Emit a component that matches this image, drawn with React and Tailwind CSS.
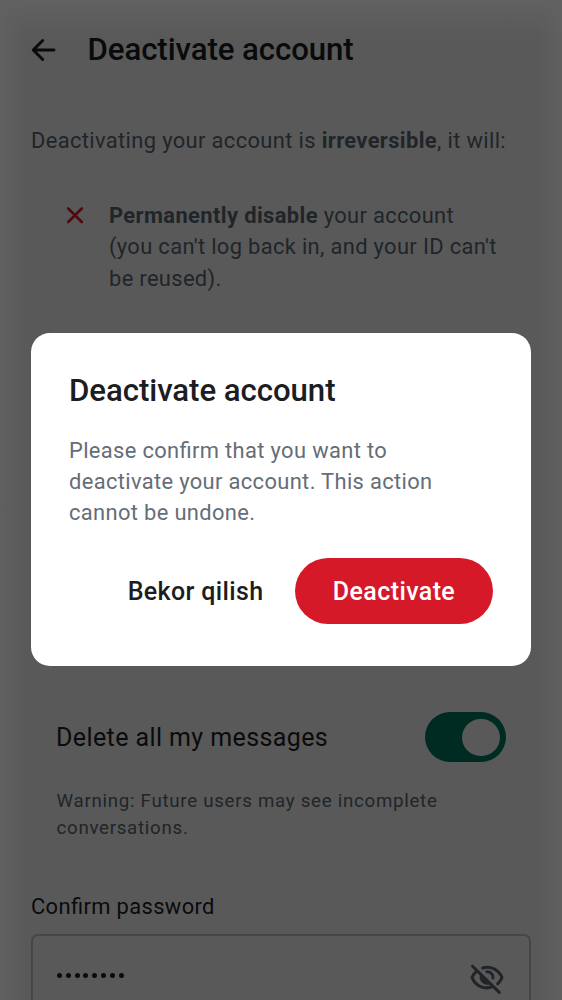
function BackIcon() {
  return (
    <svg className="h-[26px] w-[26px]" viewBox="0 0 26 26" fill="none" stroke="#090a0c" strokeWidth="2.9" strokeLinecap="round" strokeLinejoin="round">
      <path d="M23 13H2.5M11.7 3.5L2.2 13L11.7 22.5" />
    </svg>
  );
}

function EyeOffIcon() {
  return (
    <svg className="mt-px h-9 w-[38px]" viewBox="0 0 38 36" fill="none" stroke="#20252a" strokeWidth="3" strokeLinecap="round" strokeLinejoin="round">
      <path d="M4.5 6.2L31.3 32.4" strokeWidth="3" />
      <path d="M14.6 8C22.5 5.6 30.8 9.4 34 17.4C33 20 31.6 22.2 29.6 23.8" />
      <path d="M8.8 11.2C6.6 12.8 5 14.9 4 17.4C7.4 26.2 16.4 30 24.6 26.6" />
      <path d="M18.8 11.8C22.8 11.6 25.2 14.4 25 18" />
      <path d="M13.2 14.6C11 19.5 15.8 25.4 22 23.4Z" fill="#20252a" strokeWidth="2" />
    </svg>
  );
}

export default function App() {
  return (
    <div className="relative h-[1000px] w-[562px] overflow-hidden bg-[#595959] font-['Roboto',sans-serif] text-[#20252a] [font-feature-settings:'liga'_1]">
      <div className="pointer-events-none absolute inset-0 bg-[linear-gradient(to_right,#606060_0px,transparent_26px,transparent_536px,#606060_562px)]" />
      <div className="pointer-events-none absolute inset-x-0 top-0 h-9 bg-gradient-to-b from-[#616161] to-transparent" />

      <div className="relative flex h-full flex-col px-[31px]">
        <header className="flex h-[100px] shrink-0 items-center gap-[30.5px] text-[#090a0c]">
          <BackIcon />
          <h1 className="whitespace-nowrap text-[31.2px] font-medium leading-10 tracking-[-0.08px]">Deactivate account</h1>
        </header>

        <p className="mt-[25px] whitespace-nowrap text-[21.9px] leading-[31.2px] tracking-[0.36px]">
          Deactivating your account is <b>irreversible</b>, it will:
        </p>

        <div className="mt-[44px] flex pl-[35px]">
          <svg className="mt-[6px] h-[18px] w-[18px] shrink-0" viewBox="0 0 18 18" fill="none" stroke="#50090e" strokeWidth="2.6" strokeLinecap="round">
            <path d="M2.2 2.5L15.8 16M15.8 2.5L2.2 16" />
          </svg>
          <p className="ml-[25px] whitespace-nowrap text-[21.9px] leading-[31.2px] tracking-[0.34px]">
            <b className="tracking-[0.39px]">Permanently disable</b> your account<br />
            (you can't log back in, and your ID can't<br />
            be reused).
          </p>
        </div>

        <section className="mt-[417.5px] flex flex-col px-[25px]">
          <div className="flex h-[52px] items-center justify-between text-[#0a0b0c]">
            <span className="whitespace-nowrap text-[25px] tracking-[0.4px]">Delete all my messages</span>
            <span className="flex h-[50px] w-[81px] items-center justify-end rounded-full bg-[#002b22] pr-[6.5px]">
              <span className="h-[37.5px] w-[37.5px] rounded-full bg-[#595959]" />
            </span>
          </div>
          <p className="mt-[24.6px] whitespace-nowrap pl-[0.5px] text-[18.7px] leading-[26.6px] tracking-[0.72px]">
            Warning: Future users may see incomplete<br />conversations.
          </p>
        </section>

        <label className="mt-[49.9px] text-[21.9px] leading-[31.2px] tracking-[0.37px] text-[#0a0b0c]">Confirm password</label>
        <div className="mt-[12px] flex h-[86px] shrink-0 items-center justify-between rounded-[7px] border-2 border-[#45464b] pl-[24px] pr-[23px]">
          <div className="mb-[4px] flex gap-[3.8px]">
            {Array.from({ length: 8 }, (_, i) => (
              <span key={i} className="h-[5px] w-[5px] rounded-full bg-[#0a0b0c]" />
            ))}
          </div>
          <EyeOffIcon />
        </div>
      </div>

      <div role="dialog" className="absolute left-[31px] top-[333px] flex h-[333px] w-[500px] flex-col rounded-[19px] bg-white px-[38px] pt-[38px]">
        <h2 className="whitespace-nowrap text-[31.2px] font-medium leading-10 tracking-[-0.06px] text-[#1b1d22]">Deactivate account</h2>
        <p className="mt-[24px] whitespace-nowrap text-[21.9px] leading-[31.2px] tracking-[0.35px] text-[#656d77]">
          Please confirm that you want to<br />deactivate your account. This action<br />cannot be undone.
        </p>
        <div className="mt-[29px] flex items-center justify-end">
          <button className="mr-[31.5px] whitespace-nowrap pt-[2px] text-[25px] font-medium tracking-[0.36px] text-[#1b1d22]">Bekor qilish</button>
          <button className="h-[66px] w-[198px] rounded-full bg-[#d51928] pt-[2px] text-[25px] font-medium tracking-[0.4px] text-white">Deactivate</button>
        </div>
      </div>
    </div>
  );
}
